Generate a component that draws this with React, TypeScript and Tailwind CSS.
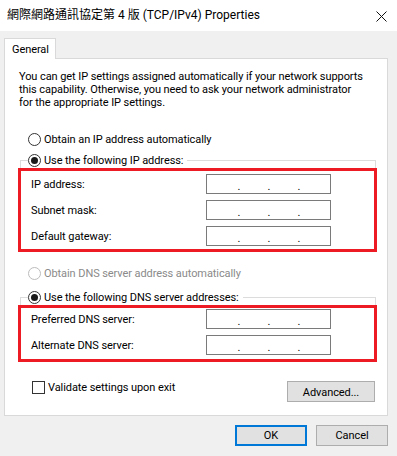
import React from "react";

function Radio({ checked, disabled }: { checked?: boolean; disabled?: boolean }) {
  return (
    <span
      className={`flex h-[13px] w-[13px] shrink-0 items-center justify-center rounded-full border bg-white ${
        disabled ? "border-[#bcbcbc]" : "border-[#333333]"
      }`}
    >
      {checked && <span className="h-[7px] w-[7px] rounded-full bg-[#1a1a1a]" />}
    </span>
  );
}

function IpBox() {
  return (
    <div className="flex h-[20px] w-[125px] items-center gap-[24px] border border-[#7a7a7a] bg-white pl-[29px] leading-none">
      <span className="w-[6px] pt-[5px] text-center">.</span>
      <span className="w-[6px] pt-[5px] text-center">.</span>
      <span className="w-[6px] pt-[5px] text-center">.</span>
    </div>
  );
}

function Legend({ label }: { label: string }) {
  return (
    <div className="ml-[2px] flex h-[16px] w-[356px] items-start">
      <div className="mt-[8px] h-[8px] w-[8px] border-l border-t border-[#dcdcdc]" />
      <div className="flex h-[16px] items-center gap-[3px] pr-[4px]">
        <Radio checked />
        <span>{label}</span>
      </div>
      <div className="mt-[8px] h-[8px] flex-1 border-r border-t border-[#dcdcdc]" />
    </div>
  );
}

function FieldRow({ label }: { label: string }) {
  return (
    <div className="flex h-[20px] items-center">
      <span className="w-[185px] pl-[10px]">{label}</span>
      <IpBox />
    </div>
  );
}

export default function App() {
  return (
    <div className="h-[456px] w-[397px] overflow-hidden bg-[#f0f0f0] font-[Roboto,'Noto_Sans_CJK_TC',sans-serif] text-[11px] leading-[13px] tracking-[-0.08px] text-black">
      {/* title bar */}
      <div className="flex h-[31px] items-center justify-between bg-white pl-[7px] pr-[10px]">
        <span className="whitespace-nowrap text-[12px] tracking-normal">網際網路通訊協定第 4 版 (TCP/IPv4) Properties</span>
        <svg width="11" height="11" viewBox="0 0 11 11" className="mt-[1px]">
          <path d="M0.5 0.5 L10.5 10.5 M10.5 0.5 L0.5 10.5" stroke="#111" strokeWidth="1" />
        </svg>
      </div>

      <div className="px-[4px] pt-[7px]">
        <div className="flex h-[20px]">
          <div className="relative z-10 -mb-px flex h-[21px] w-[52px] items-center border border-b-0 border-[#d9d9d9] bg-white pl-[7px]">
            General
          </div>
        </div>

        <div className="flex h-[358px] w-[384px] flex-col border border-[#d9d9d9] bg-white pl-[13px] pr-[11px]">
          <p className="ml-[1px] mt-[11px] whitespace-nowrap">
            You can get IP settings assigned automatically if your network supports
            <br />
            this capability. Otherwise, you need to ask your network administrator
            <br />
            for the appropriate IP settings.
          </p>

          <div className="ml-[10px] mt-[22px] flex h-[16px] items-center gap-[3px]">
            <Radio />
            <span>Obtain an IP address automatically</span>
          </div>

          <div className="mt-[5px]">
            <Legend label="Use the following IP address:" />
          </div>
          <div className="flex w-[359px] flex-col gap-[6px] border-[3px] border-[#ed1c24] py-[3px]">
            <FieldRow label="IP address:" />
            <FieldRow label="Subnet mask:" />
            <FieldRow label="Default gateway:" />
          </div>

          <div className="ml-[10px] mt-[13px] flex h-[16px] items-center gap-[3px] text-[#8a8a8a]">
            <Radio disabled />
            <span>Obtain DNS server address automatically</span>
          </div>

          <div className="mt-[8px]">
            <Legend label="Use the following DNS server addresses:" />
          </div>
          <div className="flex w-[359px] flex-col gap-[6px] border-[3px] border-[#ed1c24] pb-[4px] pt-[1px]">
            <FieldRow label="Preferred DNS server:" />
            <FieldRow label="Alternate DNS server:" />
          </div>

          <div className="mt-[19px] flex items-start justify-between pr-[1px]">
            <div className="ml-[14px] flex h-[13px] items-center gap-[3px]">
              <span className="h-[13px] w-[13px] border border-[#333333] bg-white" />
              <span>Validate settings upon exit</span>
            </div>
            <button className="h-[21px] w-[88px] border border-[#adadad] bg-[#e1e1e1] pt-[1px]">
              Advanced...
            </button>
          </div>
        </div>

        <div className="mt-[9px] flex justify-end gap-[9px] pr-[5px]">
          <button className="h-[21px] w-[72px] border-2 border-[#0078d7] bg-[#e1e1e1]">OK</button>
          <button className="h-[21px] w-[72px] border border-[#adadad] bg-[#e1e1e1]">Cancel</button>
        </div>
      </div>
    </div>
  );
}
